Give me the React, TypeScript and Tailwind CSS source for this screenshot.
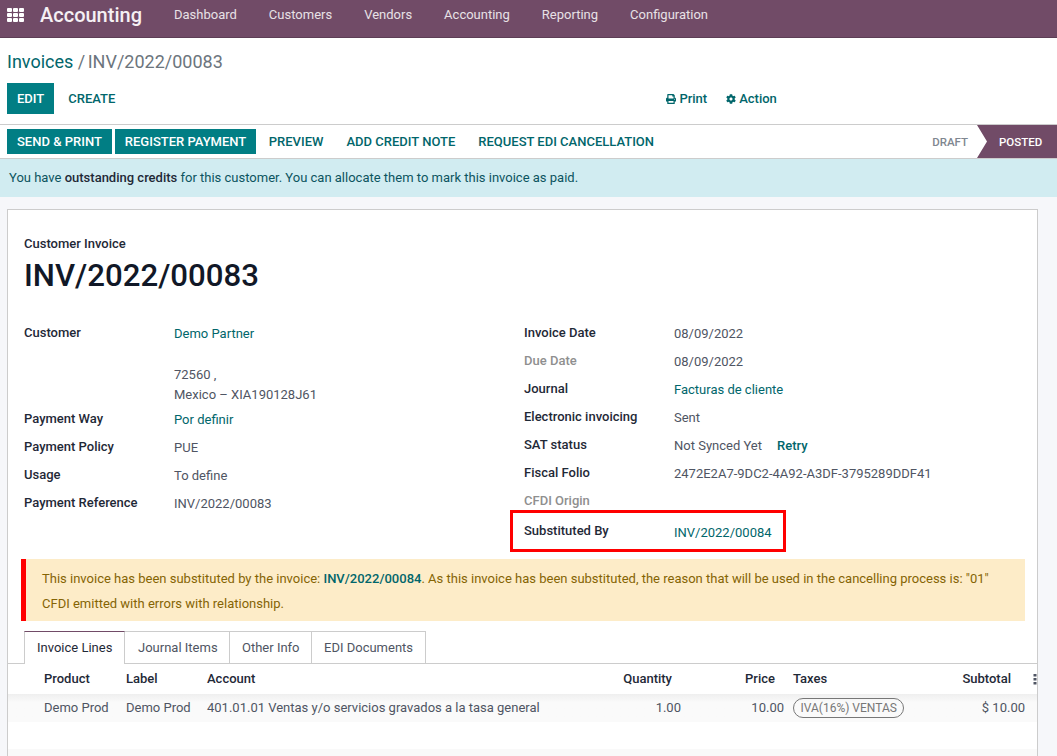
import {FaCog, FaPrint} from 'react-icons/fa'

const menu = ['Dashboard', 'Customers', 'Vendors', 'Accounting', 'Reporting', 'Configuration']
const tabs = [
  {label: 'Journal Items', width: 'w-[105px] pl-[13px]'},
  {label: 'Other Info', width: 'w-[82px] pl-[12px]'},
  {label: 'EDI Documents', width: 'w-[114px] pl-[12px]'},
]

const AppsIcon = () => (
  <svg width="17" height="14" viewBox="0 0 17 14" fill="currentColor">
    {[0, 6, 12].map((x) =>
      [0, 5, 10].map((y) => <rect key={`${x}-${y}`} x={x} y={y} width="5" height="4" rx="1" />),
    )}
  </svg>
)

const Field = ({label, muted, children}: {label: string; muted?: boolean; children?: React.ReactNode}) => (
  <div className="flex h-7 items-center">
    <div className={`w-[150px] shrink-0 pb-[2px] font-medium ${muted ? 'text-[#8f8f8f]' : 'text-[#1f2937]'}`}>{label}</div>
    <div className="flex items-center text-[#4f5563]">{children}</div>
  </div>
)

const Link = ({children}: {children: React.ReactNode}) => <span className="text-[#01666b]">{children}</span>

const TextButton = ({children}: {children: React.ReactNode}) => (
  <button className="px-[11.5px] text-[13px] font-medium text-[#01666b]">{children}</button>
)

const PrimaryButton = ({children}: {children: React.ReactNode}) => (
  <button className="bg-[#017e84] px-[10px] text-[13px] font-medium text-white">{children}</button>
)

const headCell = 'flex items-center font-medium text-[#1f2937]'

export default function App() {
  return (
    <div className="relative h-[756px] w-[1057px] overflow-hidden bg-[#f6f7fa] font-['Roboto',sans-serif] text-[13px] leading-[20px]">
      <nav className="flex h-[38px] items-center border-b border-[#5d3e55] bg-[#714b67] text-white">
        <span className="ml-[7px] mb-[8px] text-white">
          <AppsIcon />
        </span>
        <span className="ml-[16px] mb-[8px] text-[20px] font-medium text-[#f5f0f4]">Accounting</span>
        <div className="mb-[8px] ml-[32px] flex gap-[32px] text-[#e8e1e6]">
          {menu.map((item) => (
            <span key={item}>{item}</span>
          ))}
        </div>
      </nav>

      <div className="bg-white">
        <div className="px-[7px] pt-[11px] text-[18px] leading-[26px] text-[#6c757d]">
          <span className="text-[#01666b]">Invoices</span> / <span className="-ml-[2px]">INV/2022/00083</span>
        </div>
        <div className="mt-[8px] flex h-[31px] items-stretch pl-[7px]">
          <PrimaryButton>EDIT</PrimaryButton>
          <button className="ml-[4px] px-[10px] text-[13px] font-medium text-[#01666b]">CREATE</button>
          <div className="ml-[541px] flex items-center font-medium text-[#01666b]">
            <FaPrint className="mr-[3px] size-[10px]" />
            <span>Print</span>
            <FaCog className="ml-[19px] mr-[3px] size-[10px]" />
            <span>Action</span>
          </div>
        </div>

        <div className="mt-[10px] flex h-[35px] items-center border-y border-[#ccc]">
          <div className="flex h-[25px] items-stretch gap-[3px] pl-[7px]">
            <PrimaryButton>SEND &amp; PRINT</PrimaryButton>
            <PrimaryButton>REGISTER PAYMENT</PrimaryButton>
          </div>
          <div className="ml-[1px] flex">
            <TextButton>PREVIEW</TextButton>
            <TextButton>ADD CREDIT NOTE</TextButton>
            <TextButton>REQUEST EDI CANCELLATION</TextButton>
          </div>
          <div className="ml-auto flex h-full items-stretch">
            <div className="flex items-center pr-[9px] text-[11.5px] font-medium text-[#7f8790]">DRAFT</div>
            <div className="flex w-[80px] items-center bg-[#714b67] pl-[22px] text-[11.5px] font-medium text-white [clip-path:polygon(0_0,100%_0,100%_100%,0_100%,10px_50%)]">
              POSTED
            </div>
          </div>
        </div>

        <div className="flex h-[38px] items-center bg-[#d1ecf1] pl-[9px] text-[#0c5460]">
          <span>
            You have <b className="font-medium text-[#1f2937]">outstanding credits</b> for this customer. You can allocate them to mark this invoice as paid.
          </span>
        </div>
      </div>

      <main className="ml-[7px] mt-[12px] h-[600px] w-[1031px] border border-[#ccc] bg-white">
        <div className="px-[16px] pt-[24px] font-medium text-[#1f2937]">Customer Invoice</div>
        <h1 className="px-[16px] pt-[2px] text-[31.2px] font-medium leading-[40px] text-[#111827]">INV/2022/00083</h1>

        <div className="mt-[24px] flex px-[16px]">
          <div className="w-[500px]">
            <Field label="Customer">
              <Link>Demo Partner</Link>
            </Field>
            <div className="h-[17px]" />
            <div className="pb-[1px] pl-[150px] leading-[20px] text-[#4f5563]">
              72560 ,
              <br />
              Mexico – XIA190128J61
            </div>
            <Field label="Payment Way">
              <Link>Por definir</Link>
            </Field>
            <Field label="Payment Policy">PUE</Field>
            <Field label="Usage">To define</Field>
            <Field label="Payment Reference">INV/2022/00083</Field>
          </div>
          <div>
            <Field label="Invoice Date">08/09/2022</Field>
            <Field label="Due Date" muted>
              08/09/2022
            </Field>
            <Field label="Journal">
              <Link>Facturas de cliente</Link>
            </Field>
            <Field label="Electronic invoicing">Sent</Field>
            <Field label="SAT status">
              Not Synced Yet
              <span className="ml-[15px] font-medium text-[#01666b]">Retry</span>
            </Field>
            <Field label="Fiscal Folio">2472E2A7-9DC2-4A92-A3DF-3795289DDF41</Field>
            <Field label="CFDI Origin" muted />
            <div className="flex h-[32px] items-center">
              <div className="w-[150px] pb-[2px] font-medium text-[#1f2937]">Substituted By</div>
              <span className="mt-[2px]">
                <Link>INV/2022/00084</Link>
              </span>
            </div>
          </div>
        </div>

        <div className="ml-[13px] mr-[12px] mt-[11px] h-[62px] border-l-[5px] border-[#ff0000] bg-[#fdecc8] pl-[16px] pr-[16px] pt-[7px] leading-[25px] text-[#856404]">
          This invoice has been substituted by the invoice: <b className="font-medium text-[#01666b]">INV/2022/00084</b>. As this invoice has been substituted, the reason that will be used in the cancelling process is: "01" CFDI emitted with errors with relationship.
        </div>

        <div className="mt-[10px] flex h-[33px] items-stretch border-b border-[#ccc] pl-[16px] text-[#4f5563]">
          <div className="z-10 flex h-[33px] w-[101px] items-center border-x border-t border-[#ccc] border-t-[#714b67] bg-white pl-[12px] text-[#1f2937]">Invoice Lines</div>
          {tabs.map((tab) => (
            <div key={tab.label} className={`flex items-center border-r border-t border-[#ccc] ${tab.width}`}>
              {tab.label}
            </div>
          ))}
        </div>

        <div className="grid h-[30px] grid-cols-[29px_82px_81px_382px_102px_102px_135px_108px_8px] items-center">
          <span />
          <div className={`${headCell} pl-[7px]`}>Product</div>
          <div className={`${headCell} pl-[7px]`}>Label</div>
          <div className={`${headCell} pl-[7px]`}>Account</div>
          <div className={`${headCell} justify-end pr-[12px]`}>Quantity</div>
          <div className={`${headCell} justify-end pr-[11px]`}>Price</div>
          <div className={`${headCell} pl-[7px]`}>Taxes</div>
          <div className={`${headCell} justify-end pr-[18px]`}>Subtotal</div>
          <svg width="4" height="12" viewBox="0 0 4 12" fill="#4f5563" className="ml-[4px]">
            <rect x="0.5" y="1" width="3" height="2.5" />
            <rect x="0.5" y="5" width="3" height="2.5" />
            <rect x="0.5" y="9" width="3" height="2.5" />
          </svg>
        </div>

        <div className="grid h-[28px] grid-cols-[29px_82px_81px_382px_102px_102px_135px_108px_8px] items-center bg-gradient-to-b from-[#efefef] from-0% to-[#fafafa] to-30% text-[#4f5563]">
          <span />
          <div className="pl-[7px]">Demo Prod</div>
          <div className="pl-[7px]">Demo Prod</div>
          <div className="whitespace-nowrap pl-[7px]">401.01.01 Ventas y/o servicios gravados a la tasa general</div>
          <div className="pr-[3px] text-right">1.00</div>
          <div className="pr-[2px] text-right">10.00</div>
          <div className="pl-[7px]">
            <span className="inline-flex h-[20px] items-center rounded-full border border-[#777] px-[6.5px] text-[12px] text-[#777]">IVA(16%) VENTAS</span>
          </div>
          <div className="pr-[4px] text-right">$ 10.00</div>
          <span />
        </div>

        <div className="h-[27px] bg-white" />
        <div className="h-[10px] bg-[#f9f9f9]" />
      </main>

      <div className="absolute left-[510px] top-[510px] h-[42px] w-[276px] border-[3px] border-[#ff0000]" />
    </div>
  )
}
